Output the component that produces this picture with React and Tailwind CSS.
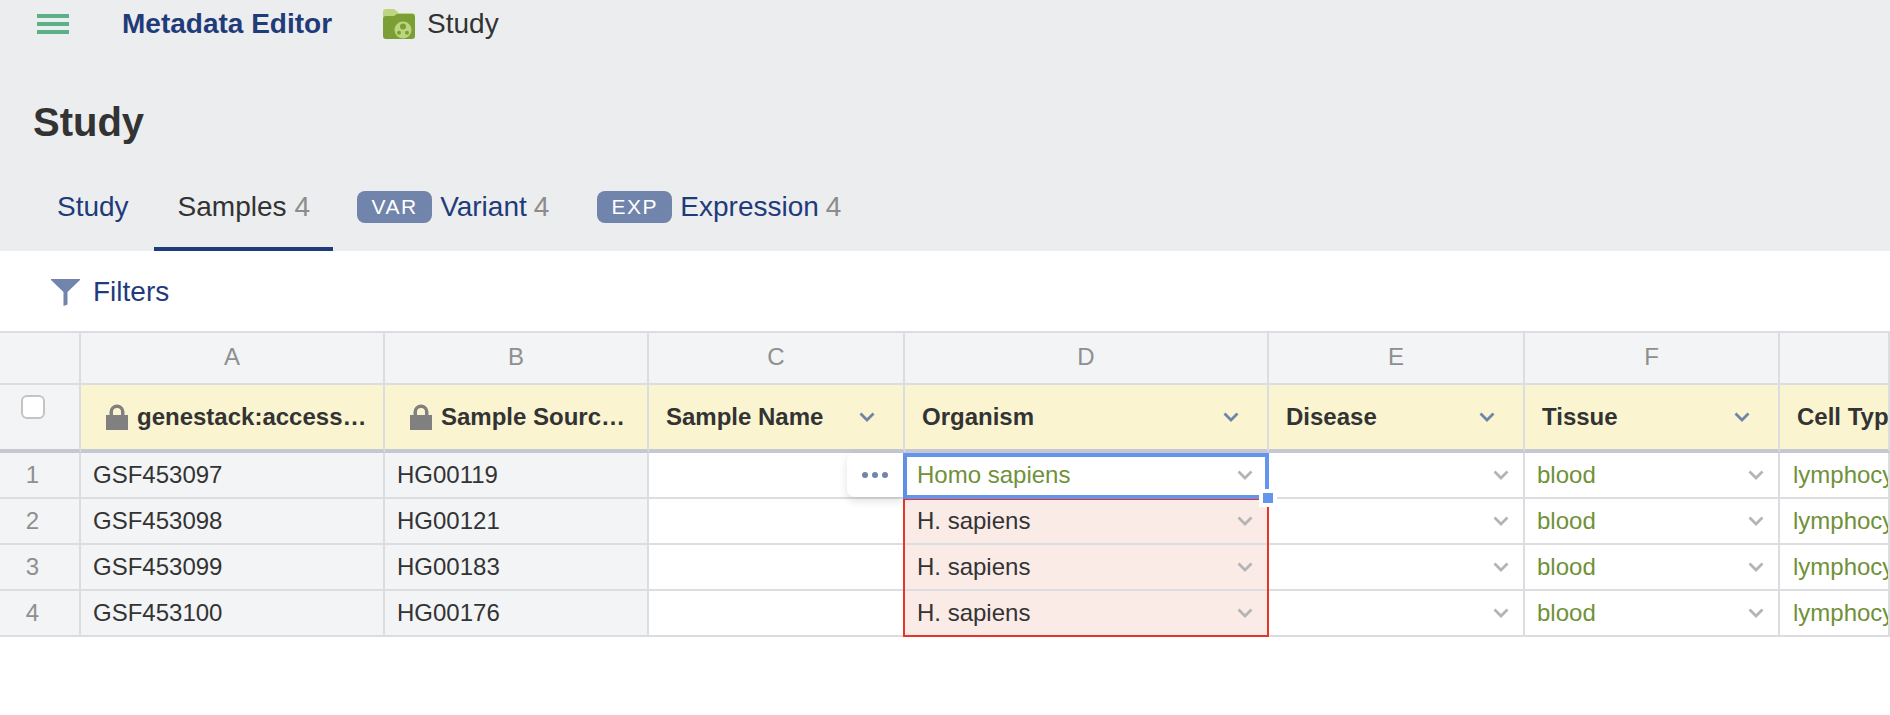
import React from 'react'

const GRID = 'grid grid-cols-[81px_304px_264px_256px_364px_256px_255px_110px]'
const LINE = 'border-r-2 border-b-2 border-[#dcdde0]'
const LETTERS = ['A', 'B', 'C', 'D', 'E', 'F', '']

const ROWS = [
  { n: 1, id: 'GSF453097', source: 'HG00119', organism: 'Homo sapiens', ok: true },
  { n: 2, id: 'GSF453098', source: 'HG00121', organism: 'H. sapiens' },
  { n: 3, id: 'GSF453099', source: 'HG00183', organism: 'H. sapiens' },
  { n: 4, id: 'GSF453100', source: 'HG00176', organism: 'H. sapiens' },
]

const Chevron = ({ className }) => (
  <svg viewBox="0 0 16 10" className={`w-[16px] h-[10px] shrink-0 ${className}`} fill="none" stroke="currentColor" strokeWidth="2.8">
    <path d="M1.5 1.5 8 8l6.5-6.5" />
  </svg>
)

const Lock = () => (
  <svg viewBox="0 0 22 26" className="w-[22px] h-[26px] shrink-0 text-[#808080]" fill="currentColor">
    <path d="M0 11h22v15H0z" />
    <path d="M3.5 12V8a7.5 7.5 0 0 1 15 0v4h-3.5V8a4 4 0 0 0-8 0v4z" />
  </svg>
)

const FolderIcon = () => (
  <svg viewBox="0 0 32 30" className="w-[32px] h-[30px] shrink-0">
    <path d="M0 3a3 3 0 0 1 3-3h8l5 4h13a3 3 0 0 1 3 3v10H0z" fill="#bcd67f" />
    <path d="M0 10a3 3 0 0 1 3-3h8l3-2h15a3 3 0 0 1 3 3v19a3 3 0 0 1-3 3H3a3 3 0 0 1-3-3z" fill="#7b9f35" />
    <circle cx="20" cy="21" r="8.5" fill="#bcd67f" />
    <circle cx="20" cy="17.5" r="3" fill="#7b9f35" />
    <circle cx="16" cy="23.8" r="2" fill="#7b9f35" />
    <circle cx="24" cy="23.8" r="2" fill="#7b9f35" />
  </svg>
)

const Badge = ({ children }) => (
  <span className="flex items-center justify-center w-[75px] h-[32px] rounded-[8px] bg-[#7184ab] text-white text-[21px] tracking-[1.5px]">
    {children}
  </span>
)

const HeaderCell = ({ label, locked }) => (
  <div className={`${LINE} !border-b-4 !border-b-[#c5c8d2] bg-[#faf5d0] h-[68px] flex items-center ${locked ? 'pl-[25px] pr-[12px]' : 'pl-[17px] pr-[28px]'} gap-[9px] overflow-hidden`}>
    {locked && <Lock />}
    <span className={`font-bold text-[24px] text-[#333] whitespace-nowrap ${locked ? 'truncate' : 'flex-1'}`}>{label}</span>
    {!locked && <Chevron className="text-[#7083a8]" />}
  </div>
)

const SelectCell = ({ value, green, bg = 'bg-white' }) => (
  <div className={`${LINE} ${bg} pl-[12px] pr-[14px] h-[46px] flex items-center justify-between overflow-hidden`}>
    <span className={`text-[24px] whitespace-nowrap ${green ? 'text-[#6f9139]' : 'text-[#333]'}`}>{value}</span>
    <Chevron className="text-[#b4b4b4]" />
  </div>
)

const PlainCell = ({ value }) => (
  <div className={`${LINE} bg-[#f3f4f6] pl-[12px] h-[46px] flex items-center text-[24px] text-[#333]`}>{value}</div>
)

const SheetTable = () => (
  <div className="relative border-t-2 border-[#dcdde0] overflow-hidden">
    <div className={GRID}>
      <div className={`${LINE} bg-[#f3f4f6] h-[52px]`} />
      {LETTERS.map((l, i) => (
        <div key={i} className={`${LINE} bg-[#f3f4f6] h-[52px] pb-[2px] flex items-center justify-center text-[24px] text-[#8f8f8f]`}>{l}</div>
      ))}
    </div>
    <div className={GRID}>
      <div className={`${LINE} !border-b-4 !border-b-[#c5c8d2] bg-[#f3f4f6] h-[68px] pl-[21px] pt-[10px]`}>
        <span className="block w-[24px] h-[24px] rounded-[6px] bg-white border-2 border-[#c4c4c4]" />
      </div>
      <HeaderCell label="genestack:accession" locked />
      <HeaderCell label="Sample Source ID" locked />
      <HeaderCell label="Sample Name" />
      <HeaderCell label="Organism" />
      <HeaderCell label="Disease" />
      <HeaderCell label="Tissue" />
      <div className={`${LINE} !border-b-4 !border-b-[#c5c8d2] bg-[#faf5d0] h-[68px] flex items-center pl-[17px] font-bold text-[24px] text-[#333] whitespace-nowrap overflow-hidden`}>Cell Type</div>
    </div>
    {ROWS.map((r) => (
      <div key={r.n} className={GRID}>
        <div className={`${LINE} bg-[#f3f4f6] h-[46px] pr-[14px] flex items-center justify-center text-[24px] text-[#8f8f8f]`}>{r.n}</div>
        <PlainCell value={r.id} />
        <PlainCell value={r.source} />
        <div className={`${LINE} bg-white h-[46px]`} />
        <SelectCell value={r.organism} green={r.ok} bg={r.ok ? 'bg-white' : 'bg-[#fbebe7]'} />
        <SelectCell value="" />
        <SelectCell value="blood" green />
        <div className={`${LINE} bg-white pl-[13px] h-[46px] flex items-center text-[24px] text-[#6f9139] whitespace-nowrap overflow-hidden`}>lymphocyte</div>
      </div>
    ))}

    {/* selection and validation overlays */}
    <div className="absolute left-[903px] top-[165px] w-[366px] h-[139px] border-2 border-[#e8352a] pointer-events-none" />
    <div className="absolute left-[903px] top-[120px] w-[366px] h-[46px] border-4 border-[#6495ed] pointer-events-none" />
    <div className="absolute left-[1259px] top-[156px] w-[18px] h-[18px] bg-[#6495ed] border-4 border-white" />
    <div className="absolute left-[847px] top-[120px] w-[56px] h-[44px] bg-white rounded-l-[8px] shadow-[0_4px_10px_rgba(0,0,0,0.12)] flex items-center justify-center gap-[4px]">
      <span className="w-[6px] h-[6px] rounded-full bg-[#7184ab]" />
      <span className="w-[6px] h-[6px] rounded-full bg-[#7184ab]" />
      <span className="w-[6px] h-[6px] rounded-full bg-[#7184ab]" />
    </div>
  </div>
)

export default function App() {
  return (
    <div className="h-[715px] w-[1890px] overflow-hidden bg-white font-['Liberation_Sans',Arial,sans-serif]">
      <div className="h-[251px] bg-[#ecedef] flex flex-col">
        {/* top bar */}
        <div className="h-[48px] flex items-center pl-[37px]">
          <div className="w-[32px] flex flex-col gap-[4px]">
            <span className="h-[4px] bg-[#5cb085]" />
            <span className="h-[4px] bg-[#5cb085]" />
            <span className="h-[4px] bg-[#5cb085]" />
          </div>
          <span className="ml-[53px] text-[28px] font-bold text-[#1f3b7a]">Metadata Editor</span>
          <span className="ml-[51px]"><FolderIcon /></span>
          <span className="ml-[12px] text-[28px] text-[#333]">Study</span>
        </div>
        <h1 className="mt-[50px] pl-[33px] text-[40px] leading-[48px] font-bold text-[#333]">Study</h1>
        {/* tabs */}
        <div className="mt-auto h-[68px] flex pl-[33px] text-[28px]">
          <div className="pl-[24px] pr-[25px] pb-[20px] flex items-center text-[#1f3b7a]">Study</div>
          <div className="pl-[24px] pr-[23px] pb-[16px] flex items-center gap-[8px] border-b-4 border-[#1f3b7a] text-[#333]">
            Samples <span className="text-[#8c8c8c]">4</span>
          </div>
          <div className="ml-[24px] pb-[20px] flex items-center gap-[8px] text-[#1f3b7a]">
            <Badge>VAR</Badge> Variant <span className="-ml-[1px] text-[#8c8c8c]">4</span>
          </div>
          <div className="ml-[48px] pb-[20px] flex items-center gap-[8px] text-[#1f3b7a]">
            <Badge>EXP</Badge> Expression <span className="-ml-[1px] text-[#8c8c8c]">4</span>
          </div>
        </div>
      </div>
      {/* filters */}
      <div className="h-[80px] pt-[2px] flex items-center pl-[51px] gap-[13px]">
        <svg viewBox="0 0 29 27" className="w-[29px] h-[27px] text-[#7184ab]" fill="currentColor">
          <path d="M0 0h29v1L16.5 13v12.5l-4 1.5V13L0 1z" />
        </svg>
        <span className="text-[28px] text-[#1f3b7a]">Filters</span>
      </div>
      <SheetTable />
    </div>
  )
}
